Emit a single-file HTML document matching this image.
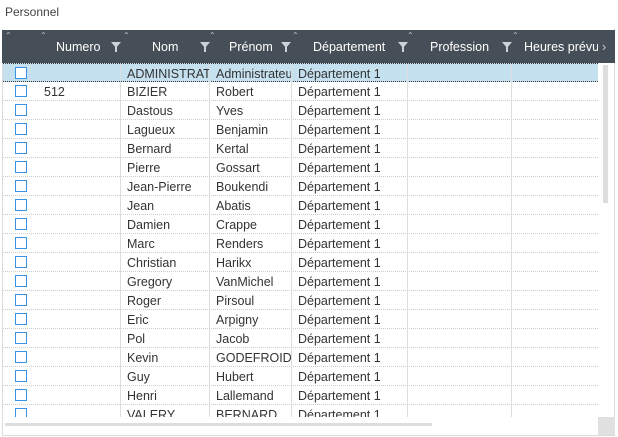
<!DOCTYPE html>
<html><head><meta charset="utf-8"><style>
*{margin:0;padding:0;box-sizing:border-box}
body{width:618px;height:437px;background:#fff;font-family:"Liberation Sans","DejaVu Sans",sans-serif;font-size:12px;color:#333;position:relative;overflow:hidden}
.t{position:absolute;left:5px;top:5px;font-size:12px;color:#444}
.box{position:absolute;left:2px;top:29px;width:613px;height:407px;border:1px solid #ddd;border-top:none}
.hd{position:absolute;left:2px;top:30px;width:613px;height:33px;background:#464f58;color:#fff}
.hd div{position:absolute;top:10px;font-size:12.5px}
.srt{position:absolute;top:1px;font-size:8px;color:#ccc}
.flt{position:absolute;top:12px;width:0;height:0;border-left:5px solid transparent;border-right:5px solid transparent;border-top:6px solid #ccd2d8}
.flt:after{content:"";position:absolute;left:-1px;top:-1px;width:2px;height:5px;background:#ccd2d8}
.rows{position:absolute;left:3px;top:63px;width:595px;height:354px;overflow:hidden}
.r{position:relative;height:19px;border-bottom:1px dotted #ccc}
.r.sel{background:#c5e1ef;border-top:1px dotted #333;border-bottom:1px dotted #333}
.c{position:absolute;top:0;height:19px;line-height:20px;padding-left:6px;white-space:nowrap;overflow:hidden;border-right:1px solid #ddd;font-size:12.5px}
.cb{position:absolute;left:12px;top:3px;width:12px;height:12px;border:1px solid #3a92e4;background:#fff}
.vs{position:absolute;left:603px;top:65px;width:5px;height:138px;background:#ddd}
.hs{position:absolute;left:5px;top:423px;width:427px;height:3px;background:#ddd}
.cor{position:absolute;left:598px;top:417px;width:17px;height:18px;background:#e0e0e0}
</style></head><body>
<div class="t">Personnel</div>
<div class="box"></div>
<div class="hd">
<span class="srt" style="left:3px">⌃</span><span class="srt" style="left:38px">⌃</span><span class="srt" style="left:121px">⌃</span><span class="srt" style="left:207px">⌃</span><span class="srt" style="left:290px">⌃</span><span class="srt" style="left:405px">⌃</span><span class="srt" style="left:510px">⌃</span>
<div style="left:54px">Numero</div><span class="flt" style="left:109px"></span>
<div style="left:150px">Nom</div><span class="flt" style="left:198px"></span>
<div style="left:227px">Prénom</div><span class="flt" style="left:279px"></span>
<div style="left:311px">Département</div><span class="flt" style="left:396px"></span>
<div style="left:428px">Profession</div><span class="flt" style="left:500px"></span>
<div style="left:522px;width:74px;overflow:hidden;white-space:nowrap">Heures prévues</div>
<div style="left:600px;color:#ccc">›</div>
</div>
<div class="rows">
<div class="r sel"><span class="cb"></span><div class="c" style="left:35px;width:83px"></div><div class="c" style="left:118px;width:89px">ADMINISTRATEUR</div><div class="c" style="left:207px;width:82px">Administrateur</div><div class="c" style="left:289px;width:116px">Département 1</div><div class="c" style="left:405px;width:104px"></div></div>
<div class="r"><span class="cb"></span><div class="c" style="left:35px;width:83px">512</div><div class="c" style="left:118px;width:89px">BIZIER</div><div class="c" style="left:207px;width:82px">Robert</div><div class="c" style="left:289px;width:116px">Département 1</div><div class="c" style="left:405px;width:104px"></div></div>
<div class="r"><span class="cb"></span><div class="c" style="left:35px;width:83px"></div><div class="c" style="left:118px;width:89px">Dastous</div><div class="c" style="left:207px;width:82px">Yves</div><div class="c" style="left:289px;width:116px">Département 1</div><div class="c" style="left:405px;width:104px"></div></div>
<div class="r"><span class="cb"></span><div class="c" style="left:35px;width:83px"></div><div class="c" style="left:118px;width:89px">Lagueux</div><div class="c" style="left:207px;width:82px">Benjamin</div><div class="c" style="left:289px;width:116px">Département 1</div><div class="c" style="left:405px;width:104px"></div></div>
<div class="r"><span class="cb"></span><div class="c" style="left:35px;width:83px"></div><div class="c" style="left:118px;width:89px">Bernard</div><div class="c" style="left:207px;width:82px">Kertal</div><div class="c" style="left:289px;width:116px">Département 1</div><div class="c" style="left:405px;width:104px"></div></div>
<div class="r"><span class="cb"></span><div class="c" style="left:35px;width:83px"></div><div class="c" style="left:118px;width:89px">Pierre</div><div class="c" style="left:207px;width:82px">Gossart</div><div class="c" style="left:289px;width:116px">Département 1</div><div class="c" style="left:405px;width:104px"></div></div>
<div class="r"><span class="cb"></span><div class="c" style="left:35px;width:83px"></div><div class="c" style="left:118px;width:89px">Jean-Pierre</div><div class="c" style="left:207px;width:82px">Boukendi</div><div class="c" style="left:289px;width:116px">Département 1</div><div class="c" style="left:405px;width:104px"></div></div>
<div class="r"><span class="cb"></span><div class="c" style="left:35px;width:83px"></div><div class="c" style="left:118px;width:89px">Jean</div><div class="c" style="left:207px;width:82px">Abatis</div><div class="c" style="left:289px;width:116px">Département 1</div><div class="c" style="left:405px;width:104px"></div></div>
<div class="r"><span class="cb"></span><div class="c" style="left:35px;width:83px"></div><div class="c" style="left:118px;width:89px">Damien</div><div class="c" style="left:207px;width:82px">Crappe</div><div class="c" style="left:289px;width:116px">Département 1</div><div class="c" style="left:405px;width:104px"></div></div>
<div class="r"><span class="cb"></span><div class="c" style="left:35px;width:83px"></div><div class="c" style="left:118px;width:89px">Marc</div><div class="c" style="left:207px;width:82px">Renders</div><div class="c" style="left:289px;width:116px">Département 1</div><div class="c" style="left:405px;width:104px"></div></div>
<div class="r"><span class="cb"></span><div class="c" style="left:35px;width:83px"></div><div class="c" style="left:118px;width:89px">Christian</div><div class="c" style="left:207px;width:82px">Harikx</div><div class="c" style="left:289px;width:116px">Département 1</div><div class="c" style="left:405px;width:104px"></div></div>
<div class="r"><span class="cb"></span><div class="c" style="left:35px;width:83px"></div><div class="c" style="left:118px;width:89px">Gregory</div><div class="c" style="left:207px;width:82px">VanMichel</div><div class="c" style="left:289px;width:116px">Département 1</div><div class="c" style="left:405px;width:104px"></div></div>
<div class="r"><span class="cb"></span><div class="c" style="left:35px;width:83px"></div><div class="c" style="left:118px;width:89px">Roger</div><div class="c" style="left:207px;width:82px">Pirsoul</div><div class="c" style="left:289px;width:116px">Département 1</div><div class="c" style="left:405px;width:104px"></div></div>
<div class="r"><span class="cb"></span><div class="c" style="left:35px;width:83px"></div><div class="c" style="left:118px;width:89px">Eric</div><div class="c" style="left:207px;width:82px">Arpigny</div><div class="c" style="left:289px;width:116px">Département 1</div><div class="c" style="left:405px;width:104px"></div></div>
<div class="r"><span class="cb"></span><div class="c" style="left:35px;width:83px"></div><div class="c" style="left:118px;width:89px">Pol</div><div class="c" style="left:207px;width:82px">Jacob</div><div class="c" style="left:289px;width:116px">Département 1</div><div class="c" style="left:405px;width:104px"></div></div>
<div class="r"><span class="cb"></span><div class="c" style="left:35px;width:83px"></div><div class="c" style="left:118px;width:89px">Kevin</div><div class="c" style="left:207px;width:82px">GODEFROID</div><div class="c" style="left:289px;width:116px">Département 1</div><div class="c" style="left:405px;width:104px"></div></div>
<div class="r"><span class="cb"></span><div class="c" style="left:35px;width:83px"></div><div class="c" style="left:118px;width:89px">Guy</div><div class="c" style="left:207px;width:82px">Hubert</div><div class="c" style="left:289px;width:116px">Département 1</div><div class="c" style="left:405px;width:104px"></div></div>
<div class="r"><span class="cb"></span><div class="c" style="left:35px;width:83px"></div><div class="c" style="left:118px;width:89px">Henri</div><div class="c" style="left:207px;width:82px">Lallemand</div><div class="c" style="left:289px;width:116px">Département 1</div><div class="c" style="left:405px;width:104px"></div></div>
<div class="r"><span class="cb"></span><div class="c" style="left:35px;width:83px"></div><div class="c" style="left:118px;width:89px">VALERY</div><div class="c" style="left:207px;width:82px">BERNARD</div><div class="c" style="left:289px;width:116px">Département 1</div><div class="c" style="left:405px;width:104px"></div></div>
</div>
<div class="vs"></div>
<div class="hs"></div>
<div class="cor"></div>
</body></html>
